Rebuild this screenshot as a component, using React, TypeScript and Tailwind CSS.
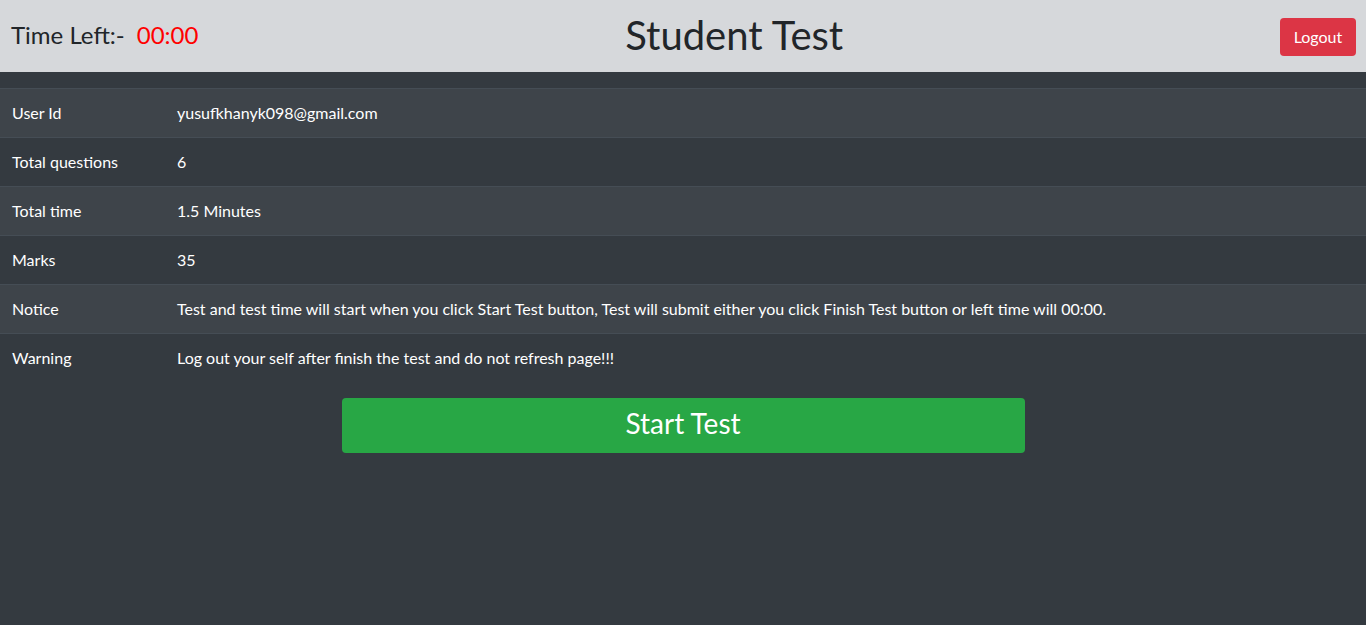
const ROWS: [string, string][] = [
  ['User Id', 'yusufkhanyk098@gmail.com'],
  ['Total questions', '6'],
  ['Total time', '1.5 Minutes'],
  ['Marks', '35'],
  [
    'Notice',
    'Test and test time will start when you click Start Test button, Test will submit either you click Finish Test button or left time will 00:00.',
  ],
  ['Warning', 'Log out your self after finish the test and do not refresh page!!!'],
]

export default function App() {
  return (
    <div
      className="min-h-[625px] bg-[#343a40] text-white"
      style={{ fontFamily: 'Lato, "Open Sans", sans-serif' }}
    >
      {/* Header */}
      <header className="h-[72px] bg-[#d6d8db] flex items-center justify-between pl-[11px] pr-[10px] text-[#212529]">
        <div className="flex items-center gap-3 text-[24px] -mt-[2px]">
          <span>Time Left:-</span>
          <span className="text-[#ff0000]">00:00</span>
        </div>
        <h1 className="text-[40px] leading-none -mt-[2px] mr-[10px]">Student Test</h1>
        <button className="bg-[#dc3545] text-white text-[16px] rounded w-[76px] h-[38px] mt-[2px]">Logout</button>
      </header>

      {/* Details */}
      <table className="w-full mt-4 text-[16px] border-collapse">
        <tbody>
          {ROWS.map(([k, v], i) => (
            <tr key={k} className={i % 2 === 0 ? 'bg-[#3e444a]' : ''}>
              <td className="border-t border-[#454d55] h-[49px] px-3 w-[165px] align-middle">{k}</td>
              <td className="border-t border-[#454d55] h-[49px] px-3 align-middle">{v}</td>
            </tr>
          ))}
        </tbody>
      </table>

      <div className="flex justify-center mt-[15px]">
        <button className="w-[683px] h-[55px] pb-[4px] bg-[#28a745] rounded text-[28px] text-white">Start Test</button>
      </div>
    </div>
  )
}
